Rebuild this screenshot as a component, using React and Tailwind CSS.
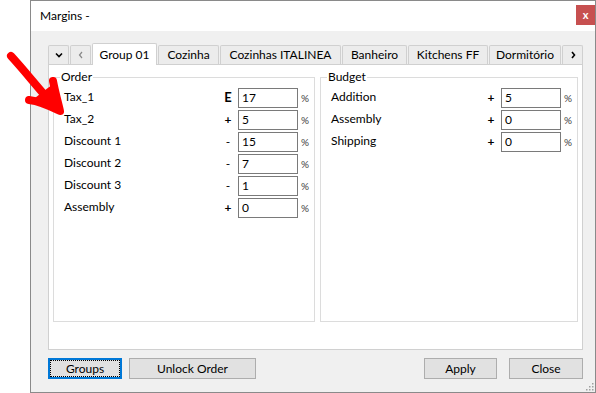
import React from "react";

const tabs = [
  { label: "Group 01", w: "w-[65px]", sel: true },
  { label: "Cozinha", w: "w-[61px]" },
  { label: "Cozinhas ITALINEA", w: "w-[121px]" },
  { label: "Banheiro", w: "w-[65px]" },
  { label: "Kitchens FF", w: "w-[80px]" },
  { label: "Dormitório", w: "w-[72px]" },
];

const orderRows = [
  { label: "Tax_1", sign: "E", value: "17" },
  { label: "Tax_2", sign: "+", value: "5" },
  { label: "Discount 1", sign: "-", value: "15" },
  { label: "Discount 2", sign: "-", value: "7" },
  { label: "Discount 3", sign: "-", value: "1" },
  { label: "Assembly", sign: "+", value: "0" },
];

const budgetRows = [
  { label: "Addition", sign: "+", value: "5" },
  { label: "Assembly", sign: "+", value: "0" },
  { label: "Shipping", sign: "+", value: "0" },
];

const Row = ({ label, sign, value }) => (
  <div className="flex items-center h-[22px] pl-[10px] pr-[7px]">
    <span className="flex-1 leading-[14px] -mt-[2px]">{label}</span>
    <span className={`w-[14px] mr-[3px] text-center ${sign === "-" ? "font-normal" : "font-bold"} ${sign === "E" ? "text-[13px]" : ""}`}>
      {sign}
    </span>
    <div className="w-[60px] h-[20px] border border-[#7a7a7a] bg-white flex items-center pl-[3px]">
      {value}
    </div>
    <span className="ml-[3px] w-[6px] text-[10px] text-[#404040]">%</span>
  </div>
);

const GroupBox = ({ title, rows, w }) => (
  <div className={`relative ${w} h-[245px] border border-[#dcdcdc]`}>
    <span className="absolute -top-[9px] left-[6px] bg-white px-[1px] leading-[16px]">{title}</span>
    <div className="pt-[9px] flex flex-col">
      {rows.map((r) => (
        <Row key={r.label} {...r} />
      ))}
    </div>
  </div>
);

const Btn = ({ children, w, focus }) => (
  <button
    className={`${w} h-[21px] bg-[#e1e1e1] flex items-center justify-center ${
      focus ? "border-2 border-[#0078d7]" : "border border-[#adadad]"
    }`}
  >
    {focus ? (
      <span className="w-full h-full border border-dotted border-black flex items-center justify-center">
        {children}
      </span>
    ) : (
      children
    )}
  </button>
);

export default function App() {
  return (
    <div className="relative w-[596px] h-[393px] bg-white text-[12px] text-black font-['Lato','Noto_Sans',sans-serif] overflow-hidden">
      <div className="ml-[30px] w-[566px] h-[393px] border border-[#8a8a8a] flex flex-col">
        {/* title bar */}
        <div className="h-[30px] bg-white flex items-center justify-between pl-[9px] pr-[0px]">
          <span className="text-[12px]">Margins -</span>
          <div className="w-[19px] h-[20px] bg-[#c75050] text-white text-[11px] font-bold flex items-center justify-center mb-[2px]">
            x
          </div>
        </div>

        {/* body */}
        <div className="flex-1 bg-[#f0f0f0] pt-[12px] pl-[17px] pr-[12px] relative">
          {/* tab strip */}
          <div className="flex items-end gap-[1px] h-[21px]">
            <div className="w-[21px] h-[19px] border border-[#d0d0d0] border-b-0 rounded-t-[2px] bg-[#ececec] flex items-center justify-center">
              <svg width="8" height="6" viewBox="0 0 8 6">
                <path d="M1 1.5 L4 4.5 L7 1.5" stroke="#000" strokeWidth="1.6" fill="none" />
              </svg>
            </div>
            <div className="w-[21px] h-[19px] border border-[#d0d0d0] border-b-0 rounded-t-[2px] bg-[#ececec] flex items-center justify-center">
              <svg width="6" height="8" viewBox="0 0 6 8">
                <path d="M4 1 L1.5 4 L4 7" stroke="#888" strokeWidth="1.2" fill="none" />
              </svg>
            </div>
            {tabs.map((t) =>
              t.sel ? (
                <div
                  key={t.label}
                  className={`${t.w} h-[22px] -mb-[1px] relative z-10 bg-white border border-[#d0d0d0] border-b-0 rounded-t-[2px] flex items-center justify-center`}
                >
                  {t.label}
                </div>
              ) : (
                <div
                  key={t.label}
                  className={`${t.w} h-[19px] bg-[#ececec] border border-[#d0d0d0] border-b-0 rounded-t-[2px] flex items-center justify-center`}
                >
                  {t.label}
                </div>
              )
            )}
            <div className="w-[21px] h-[19px] border border-[#d0d0d0] border-b-0 rounded-t-[2px] bg-[#ececec] flex items-center justify-center">
              <svg width="6" height="8" viewBox="0 0 6 8">
                <path d="M2 1 L4.5 4 L2 7" stroke="#000" strokeWidth="1.6" fill="none" />
              </svg>
            </div>
          </div>

          {/* tab page */}
          <div className="h-[286px] bg-white border border-[#d0d0d0] pt-[12px] pl-[4px] flex gap-[5px]">
            <GroupBox title="Order" rows={orderRows} w="w-[262px]" />
            <GroupBox title="Budget" rows={budgetRows} w="w-[258px]" />
          </div>

          {/* buttons */}
          <div className="flex mt-[8px]">
            <Btn w="w-[74px]" focus>
              Groups
            </Btn>
            <div className="ml-[7px]">
              <Btn w="w-[127px]">Unlock Order</Btn>
            </div>
            <div className="ml-auto flex gap-[12px]">
              <Btn w="w-[73px]">Apply</Btn>
              <Btn w="w-[74px]">Close</Btn>
            </div>
          </div>

          {/* size grip */}
          <svg className="absolute right-[1px] bottom-[1px]" width="10" height="10" viewBox="0 0 10 10">
            {[
              [8, 2],
              [8, 5],
              [5, 5],
              [8, 8],
              [5, 8],
              [2, 8],
            ].map(([x, y]) => (
              <rect key={`${x}-${y}`} x={x} y={y} width="1.5" height="1.5" fill="#a0a0a0" />
            ))}
          </svg>
        </div>
      </div>

      {/* red annotation arrow */}
      <svg className="absolute left-0 top-0 pointer-events-none" width="80" height="130" viewBox="0 0 80 130">
        <g stroke="#ff0000" strokeWidth="8" strokeLinecap="round" strokeLinejoin="round" fill="none">
          <path d="M11 56 C24 70 38 88 56 108" />
          <path d="M53 81 C55 92 58 102 60 111 C50 106 38 101 29 100" />
        </g>
        <path d="M53 84 L60 111 L31 101 Z" fill="#ff0000" />
      </svg>
    </div>
  );
}
